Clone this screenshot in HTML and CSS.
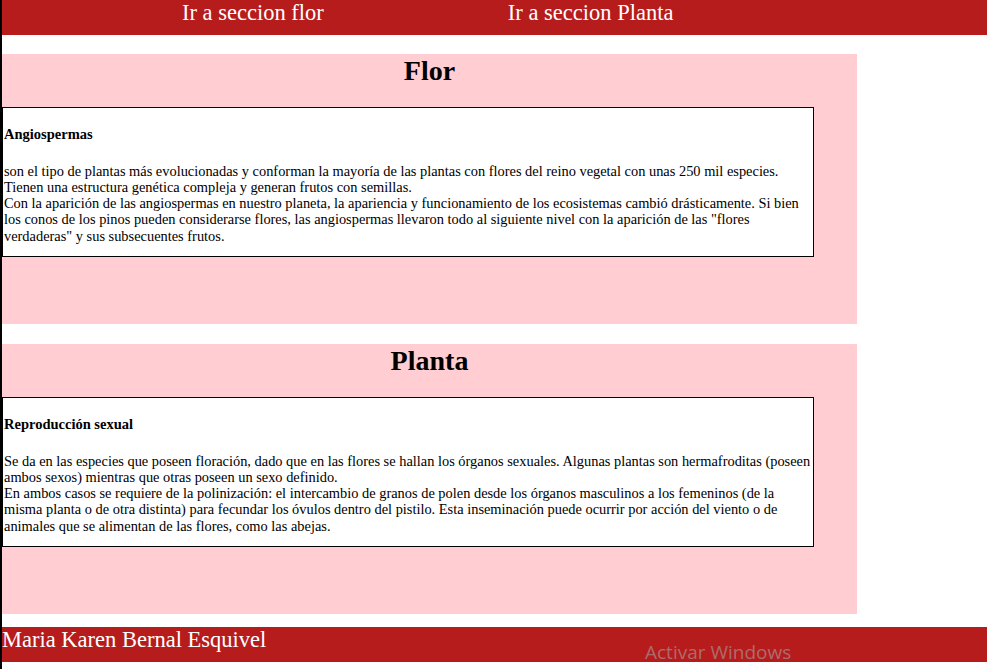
FILE: index.html
```html
<!DOCTYPE html>
<html lang="es">
<head>
<meta charset="utf-8">
<title>Flor y Planta</title>
<link rel="stylesheet" href="styles.css">
</head>
<body>
<header class="topbar">
  <a class="navlink" href="#flor">Ir a seccion flor</a>
  <a class="navlink" href="#planta">Ir a seccion Planta</a>
</header>

<main class="content">
  <section class="seccion" id="flor">
    <h1 class="titulo">Flor</h1>
    <div class="caja">
      <h4 class="subtitulo">Angiospermas</h4>
      <p class="texto">son el tipo de plantas más evolucionadas y conforman la mayoría de las plantas con flores del reino vegetal con unas 250 mil especies. Tienen una estructura genética compleja y generan frutos con semillas.<br>Con la aparición de las angiospermas en nuestro planeta, la apariencia y funcionamiento de los ecosistemas cambió drásticamente. Si bien los conos de los pinos pueden considerarse flores, las angiospermas llevaron todo al siguiente nivel con la aparición de las "flores verdaderas" y sus subsecuentes frutos.</p>
    </div>
  </section>

  <section class="seccion" id="planta">
    <h1 class="titulo">Planta</h1>
    <div class="caja">
      <h4 class="subtitulo">Reproducción sexual</h4>
      <p class="texto">Se da en las especies que poseen floración, dado que en las flores se hallan los órganos sexuales. Algunas plantas son hermafroditas (poseen ambos sexos) mientras que otras poseen un sexo definido.<br>En ambos casos se requiere de la polinización: el intercambio de granos de polen desde los órganos masculinos a los femeninos (de la misma planta o de otra distinta) para fecundar los óvulos dentro del pistilo. Esta inseminación puede ocurrir por acción del viento o de animales que se alimentan de las flores, como las abejas.</p>
    </div>
  </section>
</main>

<footer class="pie">
  <span class="autor">Maria Karen Bernal Esquivel</span>
  <span class="marca">Activar Windows</span>
</footer>
</body>
</html>
```

FILE: styles.css
```css
html {
  background: #ffffff;
}

body {
  margin: 0;
  min-height: 100vh;
  border-left: 2px solid #000000;
  font-family: "Liberation Serif", "Times New Roman", serif;
  color: #000000;
  background: #ffffff;
}

.topbar {
  margin-left: -2px;
  height: 35px;
  background: #b71c1c;
  display: flex;
  gap: 184px;
  padding-left: 182px;
  box-sizing: border-box;
}

.navlink {
  color: #ffffff;
  text-decoration: none;
  font-size: 22.5px;
  line-height: normal;
}

.content {
  display: flex;
  flex-direction: column;
  gap: 20px;
  padding-top: 19px;
  padding-bottom: 13px;
}

.seccion {
  width: 855px;
  height: 270px;
  box-sizing: border-box;
  background: #ffcdd2;
  padding-top: 1px;
}

.titulo {
  margin: 0;
  text-align: center;
  font-size: 28px;
  font-weight: bold;
  line-height: normal;
}

.caja {
  width: 812px;
  box-sizing: border-box;
  margin-top: 19.5px;
  border: 1px solid #000000;
  background: #ffffff;
  padding: 0 0 0 1px;
}

.subtitulo {
  font-size: 14.5px;
  line-height: 16.1px;
  font-weight: bold;
  margin: 18.6px 0 21px;
}

.texto {
  font-size: 14.4px;
  line-height: 16.1px;
  margin: 0 0 12px;
}

.pie {
  position: relative;
  margin-left: -2px;
  height: 35px;
  background: #b71c1c;
  box-sizing: border-box;
}

.autor {
  color: #ffffff;
  font-size: 22.5px;
  line-height: normal;
  padding-left: 2px;
}

.marca {
  position: absolute;
  left: 645px;
  top: 12px;
  font-family: "Open Sans", "Noto Sans", sans-serif;
  font-size: 19px;
  line-height: normal;
  color: rgba(165, 160, 160, 0.62);
  white-space: nowrap;
}
```
